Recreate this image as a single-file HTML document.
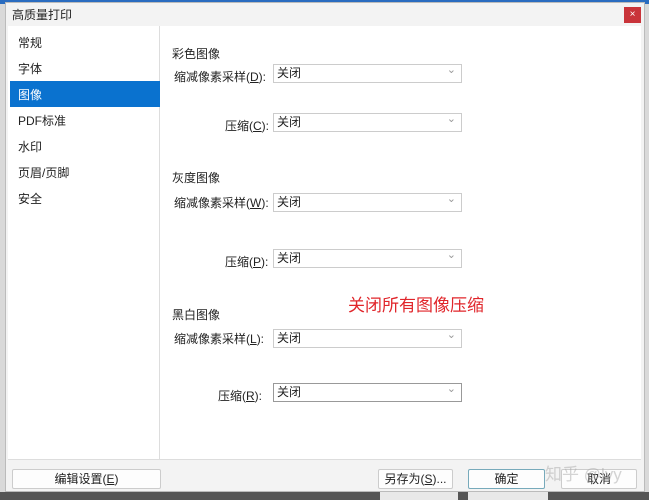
<!DOCTYPE html>
<html><head><meta charset="utf-8"><style>
body{margin:0;width:649px;height:500px;overflow:hidden;background:#d9d9d9;font-family:"Liberation Sans","Noto Sans CJK SC",sans-serif;font-size:12px;color:#222;position:relative}
.abs{position:absolute}
.dlg{left:5px;top:2px;width:640px;height:490px;background:#f3f3f3;border:1px solid #bbb;box-sizing:border-box}
.sel{border:1px solid #ccc;background:#fff;height:19px;width:189px;box-sizing:border-box;padding-left:3px;line-height:17px}
.sel:after{content:"⌄";position:absolute;right:5px;top:-3px;color:#999;font-size:11px}
.btn{border:1px solid #ccc;background:#fdfdfd;height:20px;box-sizing:border-box;text-align:center;line-height:18px;border-radius:2px}
</style></head><body>
<div class="abs" style="left:0;top:0;width:649px;height:4px;background:#2a6cc0"></div>
<div class="abs" style="left:0;top:492px;width:649px;height:8px;background:#555"></div>
<div class="abs" style="left:380px;top:492px;width:78px;height:8px;background:#e8e8e8"></div>
<div class="abs" style="left:468px;top:492px;width:80px;height:8px;background:#e8e8e8"></div>
<div class="abs dlg"></div>
<div class="abs" style="left:12px;top:6px;">高质量打印</div>
<div class="abs" style="left:624px;top:7px;width:17px;height:16px;background:#c9343a;color:#fff;text-align:center;line-height:15px;font-size:10px">×</div>
<div class="abs" style="left:8px;top:26px;width:633px;height:433px;background:#fff;border-bottom:1px solid #ddd"></div>
<div class="abs" style="left:159px;top:26px;width:1px;height:433px;background:#ddd"></div>
<div class="abs" style="left:10px;top:81px;width:150px;height:26px;background:#0a72cf"></div>
<div class="abs" style="left:18px;top:30px;line-height:26px">常规<br>字体<br><span style="color:#fff">图像</span><br>PDF标准<br>水印<br>页眉/页脚<br>安全</div>
<div class="abs" style="left:172px;top:45px">彩色图像</div>
<div class="abs" style="left:174px;top:68px">缩减像素采样(<u>D</u>):</div>
<div class="abs sel" style="left:273px;top:64px">关闭</div>
<div class="abs" style="left:225px;top:117px">压缩(<u>C</u>):</div>
<div class="abs sel" style="left:273px;top:113px">关闭</div>
<div class="abs" style="left:172px;top:169px">灰度图像</div>
<div class="abs" style="left:174px;top:194px">缩减像素采样(<u>W</u>):</div>
<div class="abs sel" style="left:273px;top:193px">关闭</div>
<div class="abs" style="left:225px;top:253px">压缩(<u>P</u>):</div>
<div class="abs sel" style="left:273px;top:249px">关闭</div>
<div class="abs" style="left:172px;top:306px">黑白图像</div>
<div class="abs" style="left:174px;top:330px">缩减像素采样(<u>L</u>):</div>
<div class="abs sel" style="left:273px;top:329px">关闭</div>
<div class="abs" style="left:218px;top:387px">压缩(<u>R</u>):</div>
<div class="abs sel" style="left:273px;top:383px;border-color:#999">关闭</div>
<div class="abs" style="left:348px;top:291px;color:#e0252a;font-size:17px">关闭所有图像压缩</div>
<div class="abs btn" style="left:12px;top:469px;width:149px">编辑设置(<u>E</u>)</div>
<div class="abs btn" style="left:378px;top:469px;width:75px">另存为(<u>S</u>)...</div>
<div class="abs btn" style="left:468px;top:469px;width:77px;border-color:#7ab">确定</div>
<div class="abs btn" style="left:561px;top:469px;width:76px">取消</div>
<div class="abs" style="left:545px;top:460px;color:rgba(170,170,170,.5);font-size:17px">知乎 @lvy</div>
</body></html>
